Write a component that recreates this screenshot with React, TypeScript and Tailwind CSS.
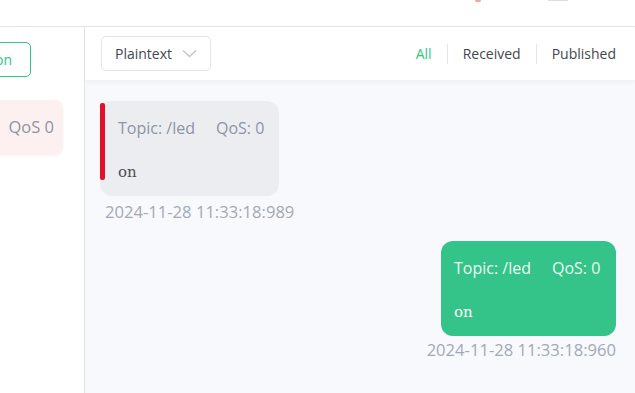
import React from "react";

const mono = { fontFamily: '"DejaVu Serif", "Liberation Serif", serif' };

export default function App() {
  return (
    <div className="w-[635px] h-[393px] overflow-hidden bg-white flex flex-col" style={{ fontFamily: '"Open Sans", "Noto Sans", sans-serif' }}>
      {/* header */}
      <div className="h-[27px] shrink-0 border-b border-[#e4e5ea] flex items-start">
        <div className="ml-[475px] w-[6px] h-[2px] rounded-b bg-[#f3a2a2]" />
        <div className="ml-[67px] w-[20px] h-[1px] bg-[#dcdde2]" />
      </div>
      <div className="flex flex-1 min-h-0">
        {/* left sidebar */}
        <div className="w-[85px] shrink-0 border-r border-[#e4e5ea] bg-white">
          <div className="mt-[15px] ml-[-40px] w-[71px] h-[35px] rounded-[5px] border border-[#34c388] flex items-center justify-end pr-[18px] text-[14px] text-[#34c388]">
            on
          </div>
          <div className="mt-[23px] ml-[-60px] w-[123px] h-[55px] rounded-[8px] bg-[#fdf0f1] shadow-[0_1px_3px_rgba(0,0,0,0.04)] flex items-center justify-end pr-[9px] text-[16.5px] text-[#8c95a5]">
            QoS 0
          </div>
        </div>
        {/* main */}
        <div className="flex-1 flex flex-col bg-[#f8f9fd]">
          <div className="h-[53px] shrink-0 bg-white shadow-[0_2px_5px_rgba(0,0,0,0.05)] flex items-center pl-[16px] pr-[19px] z-10">
            <div className="w-[110px] h-[35px] border border-[#e4e5ea] rounded-[5px] flex items-center pl-[13px] text-[14px] text-[#434750]">
              <span>Plaintext</span>
              <svg className="ml-[10px]" width="15" height="9" viewBox="0 0 15 9" fill="none">
                <path d="M1 1.5 L7.5 7.5 L14 1.5" stroke="#c2c5cc" strokeWidth="1.4" />
              </svg>
            </div>
            <div className="flex-1" />
            <div className="flex items-center text-[14px] text-[#434750]">
              <span className="text-[#34c388]">All</span>
              <div className="w-px h-[20px] bg-[#e4e5ea] mx-[15px]" />
              <span>Received</span>
              <div className="w-px h-[20px] bg-[#e4e5ea] mx-[15px]" />
              <span>Published</span>
            </div>
          </div>
          <div className="flex-1 flex flex-col pl-[15px] pr-[19px] pt-[21px]">
            {/* received */}
            <div className="self-start flex flex-col">
              <div className="relative w-[179px] h-[95px] rounded-[12px] bg-[#ecedf1] pl-[18px] pt-[16px]">
                <div className="absolute left-0 top-[2px] w-[5px] h-[77px] rounded-[2px] bg-[#e0112b]" />
                <div className="flex text-[16px] text-[#8c95a5] leading-[22px]">
                  <span>Topic: /led</span>
                  <span className="ml-[21px]">QoS: 0</span>
                </div>
                <div className="mt-[24px] text-[15px] text-[#4a4e57] leading-[18px]" style={mono}>on</div>
              </div>
              <div className="mt-[5px] ml-[5px] text-[16.6px] text-[#a2a9b5] leading-[22px]">2024-11-28 11:33:18:989</div>
            </div>
            {/* published */}
            <div className="self-end flex flex-col items-end mt-[18px]">
              <div className="w-[175px] h-[95px] rounded-[12px] bg-[#34c388] pl-[13px] pt-[16px]">
                <div className="flex text-[16px] text-[#eefaf4] leading-[22px]">
                  <span>Topic: /led</span>
                  <span className="ml-[21px]">QoS: 0</span>
                </div>
                <div className="mt-[24px] text-[15px] text-white leading-[18px]" style={mono}>on</div>
              </div>
              <div className="mt-[3px] text-[16.6px] text-[#a2a9b5] leading-[22px]">2024-11-28 11:33:18:960</div>
            </div>
          </div>
        </div>
      </div>
    </div>
  );
}
